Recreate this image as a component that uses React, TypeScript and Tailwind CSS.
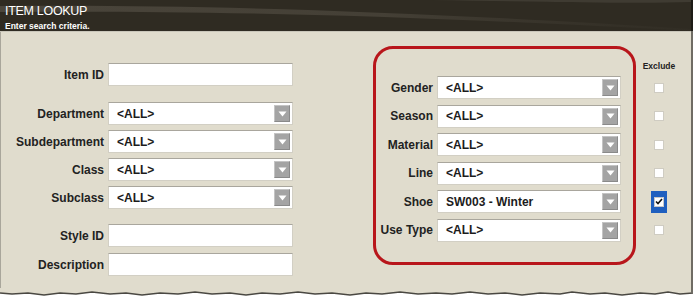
import React from "react";

const font = { fontFamily: '"Liberation Sans", Arial, sans-serif' };

function Arrow() {
  return (
    <div className="flex h-[17px] w-[16px] items-center justify-center border border-t-[#c4c4c4] border-l-[#c4c4c4] border-b-[#8a8a8a] border-r-[#8a8a8a] bg-[#a4a4a4]">
      <svg width="9" height="6" viewBox="0 0 9 6">
        <path d="M0.5 0.5 L8.5 0.5 L4.5 5.5 Z" fill="#ffffff" />
      </svg>
    </div>
  );
}

function Field({ value, dropdown, width }: { value?: string; dropdown?: boolean; width: string }) {
  return (
    <div
      className={`flex h-[23px] ${width} items-center justify-between border border-[#d2cfc4] border-t-[#a9a69d] bg-white pl-[8px] pr-[2px]`}
    >
      <span className="text-[12px] font-bold text-[#1c1c1c]">{value ?? ""}</span>
      {dropdown ? <Arrow /> : null}
    </div>
  );
}

function Row({
  label,
  labelW,
  value,
  dropdown,
  width,
  className = "",
}: {
  label: string;
  labelW: string;
  value?: string;
  dropdown?: boolean;
  width: string;
  className?: string;
}) {
  return (
    <div className={`flex items-center ${className}`}>
      <div className={`${labelW} pr-[4px] text-right text-[12px] font-bold text-[#222]`}>{label}</div>
      <Field value={value} dropdown={dropdown} width={width} />
    </div>
  );
}

function Box({ checked }: { checked?: boolean }) {
  if (checked) {
    return (
      <div className="flex h-[22px] w-[16px] items-center justify-center bg-[#1f5fbf]">
        <div className="flex h-[10px] w-[10px] items-center justify-center border border-[#c9c9c9] bg-white">
          <svg width="8" height="7" viewBox="0 0 8 7">
            <path d="M1 3.5 L3 5.5 L7 1" stroke="#111" strokeWidth="1.6" fill="none" />
          </svg>
        </div>
      </div>
    );
  }
  return <div className="h-[10px] w-[10px] border border-[#cfccc2] bg-white" />;
}

export default function App() {
  const right = ["Gender", "Season", "Material", "Line", "Shoe", "Use Type"];
  return (
    <div className="relative h-[300px] w-[698px] overflow-hidden bg-white" style={font}>
      <div className="w-[693px]">
        {/* Header */}
        <div className="relative h-[31px] overflow-hidden border-r-2 border-[#1d1b16] bg-[#2f2b22]">
          <svg className="absolute left-0 top-0" width="693" height="31" viewBox="0 0 693 31">
            <defs>
              <linearGradient id="sw" x1="0" y1="0" x2="1" y2="0">
                <stop offset="0" stopColor="#4d483e" stopOpacity="0.9" />
                <stop offset="0.55" stopColor="#4a453b" stopOpacity="0.8" />
                <stop offset="1" stopColor="#3a362d" stopOpacity="0.2" />
              </linearGradient>
            </defs>
            <path d="M0 6 C 200 4, 420 12, 693 29 L693 31 C 420 16, 200 10, 0 12 Z" fill="url(#sw)" />
            <path d="M430 0 C 560 2, 640 4, 693 2 L693 0 Z" fill="#3f3b32" />
          </svg>
          <div className="relative pl-[5px] pt-[4px]">
            <div className="text-[12.5px] leading-[14px] tracking-[-0.3px] text-white">ITEM LOOKUP</div>
            <div className="mt-[3px] text-[8.5px] font-bold leading-[10px] text-white">Enter search criteria.</div>
          </div>
        </div>
        <div className="h-[1px] border-r-2 border-[#6f6c64] bg-[#c9c6ba]" />
        {/* Body */}
        <div className="flex h-[256px] items-start border-l border-r-2 border-l-[#a9a69b] border-r-[#6f6c64] bg-[#e0dccd]">
          {/* Left column */}
          <div className="flex flex-col">
            <Row className="mt-[31px]" label="Item ID" labelW="w-[107px]" width="w-[185px]" />
            <Row className="mt-[16px]" label="Department" labelW="w-[107px]" width="w-[185px]" value="<ALL>" dropdown />
            <Row className="mt-[5px]" label="Subdepartment" labelW="w-[107px]" width="w-[185px]" value="<ALL>" dropdown />
            <Row className="mt-[5px]" label="Class" labelW="w-[107px]" width="w-[185px]" value="<ALL>" dropdown />
            <Row className="mt-[5px]" label="Subclass" labelW="w-[107px]" width="w-[185px]" value="<ALL>" dropdown />
            <Row className="mt-[15px]" label="Style ID" labelW="w-[107px]" width="w-[185px]" />
            <Row className="mt-[6px]" label="Description" labelW="w-[107px]" width="w-[185px]" />
          </div>
          {/* Red box */}
          <div className="ml-[80px] mt-[14px] flex w-[263px] flex-col gap-[5.6px] rounded-[20px] border-[3px] border-[#b8161b] pb-[20px] pl-[2px] pt-[27px]">
            {right.map((l) => (
              <Row
                key={l}
                label={l}
                labelW="w-[59px]"
                width="w-[184px]"
                value={l === "Shoe" ? "SW003 - Winter" : "<ALL>"}
                dropdown
              />
            ))}
          </div>
          {/* Exclude column */}
          <div className="ml-[6px] mt-[28px] flex w-[34px] flex-col items-center">
            <div className="h-[12px] text-[8.5px] font-bold leading-[12px] text-[#222]">Exclude</div>
            <div className="mt-[4px] flex flex-col gap-[5.6px]">
              {right.map((l) => (
                <div key={l} className="flex h-[23px] items-center justify-center">
                  <Box checked={l === "Shoe"} />
                </div>
              ))}
            </div>
          </div>
        </div>
        {/* Torn edge */}
        <svg width="693" height="10" viewBox="0 0 693 10" className="block">
          <path
            d="M0 0 L693 0 L693 5 L680 6 L668 4 L655 6 L640 5 L622 7 L605 5 L590 6 L572 4 L560 6 L540 5 L522 7 L505 5 L488 6 L470 4 L452 6 L436 5 L418 6 L400 4 L382 6 L366 5 L350 7 L332 5 L315 6 L298 4 L280 6 L262 5 L246 7 L230 5 L212 6 L195 4 L178 6 L160 5 L142 7 L126 5 L110 6 L92 4 L76 6 L60 5 L44 7 L28 5 L12 6 L0 5 Z"
            fill="#e0dccd"
          />
          <path
            d="M0 5 L12 6 L28 5 L44 7 L60 5 L76 6 L92 4 L110 6 L126 5 L142 7 L160 5 L178 6 L195 4 L212 6 L230 5 L246 7 L262 5 L280 6 L298 4 L315 6 L332 5 L350 7 L366 5 L382 6 L400 4 L418 6 L436 5 L452 6 L470 4 L488 6 L505 5 L522 7 L540 5 L560 6 L572 4 L590 6 L605 5 L622 7 L640 5 L655 6 L668 4 L680 6 L693 5"
            stroke="#4a4842"
            strokeWidth="1.5"
            fill="none"
          />
          <path d="M692 0 L692 5" stroke="#6f6c64" strokeWidth="2" />
        </svg>
      </div>
    </div>
  );
}
